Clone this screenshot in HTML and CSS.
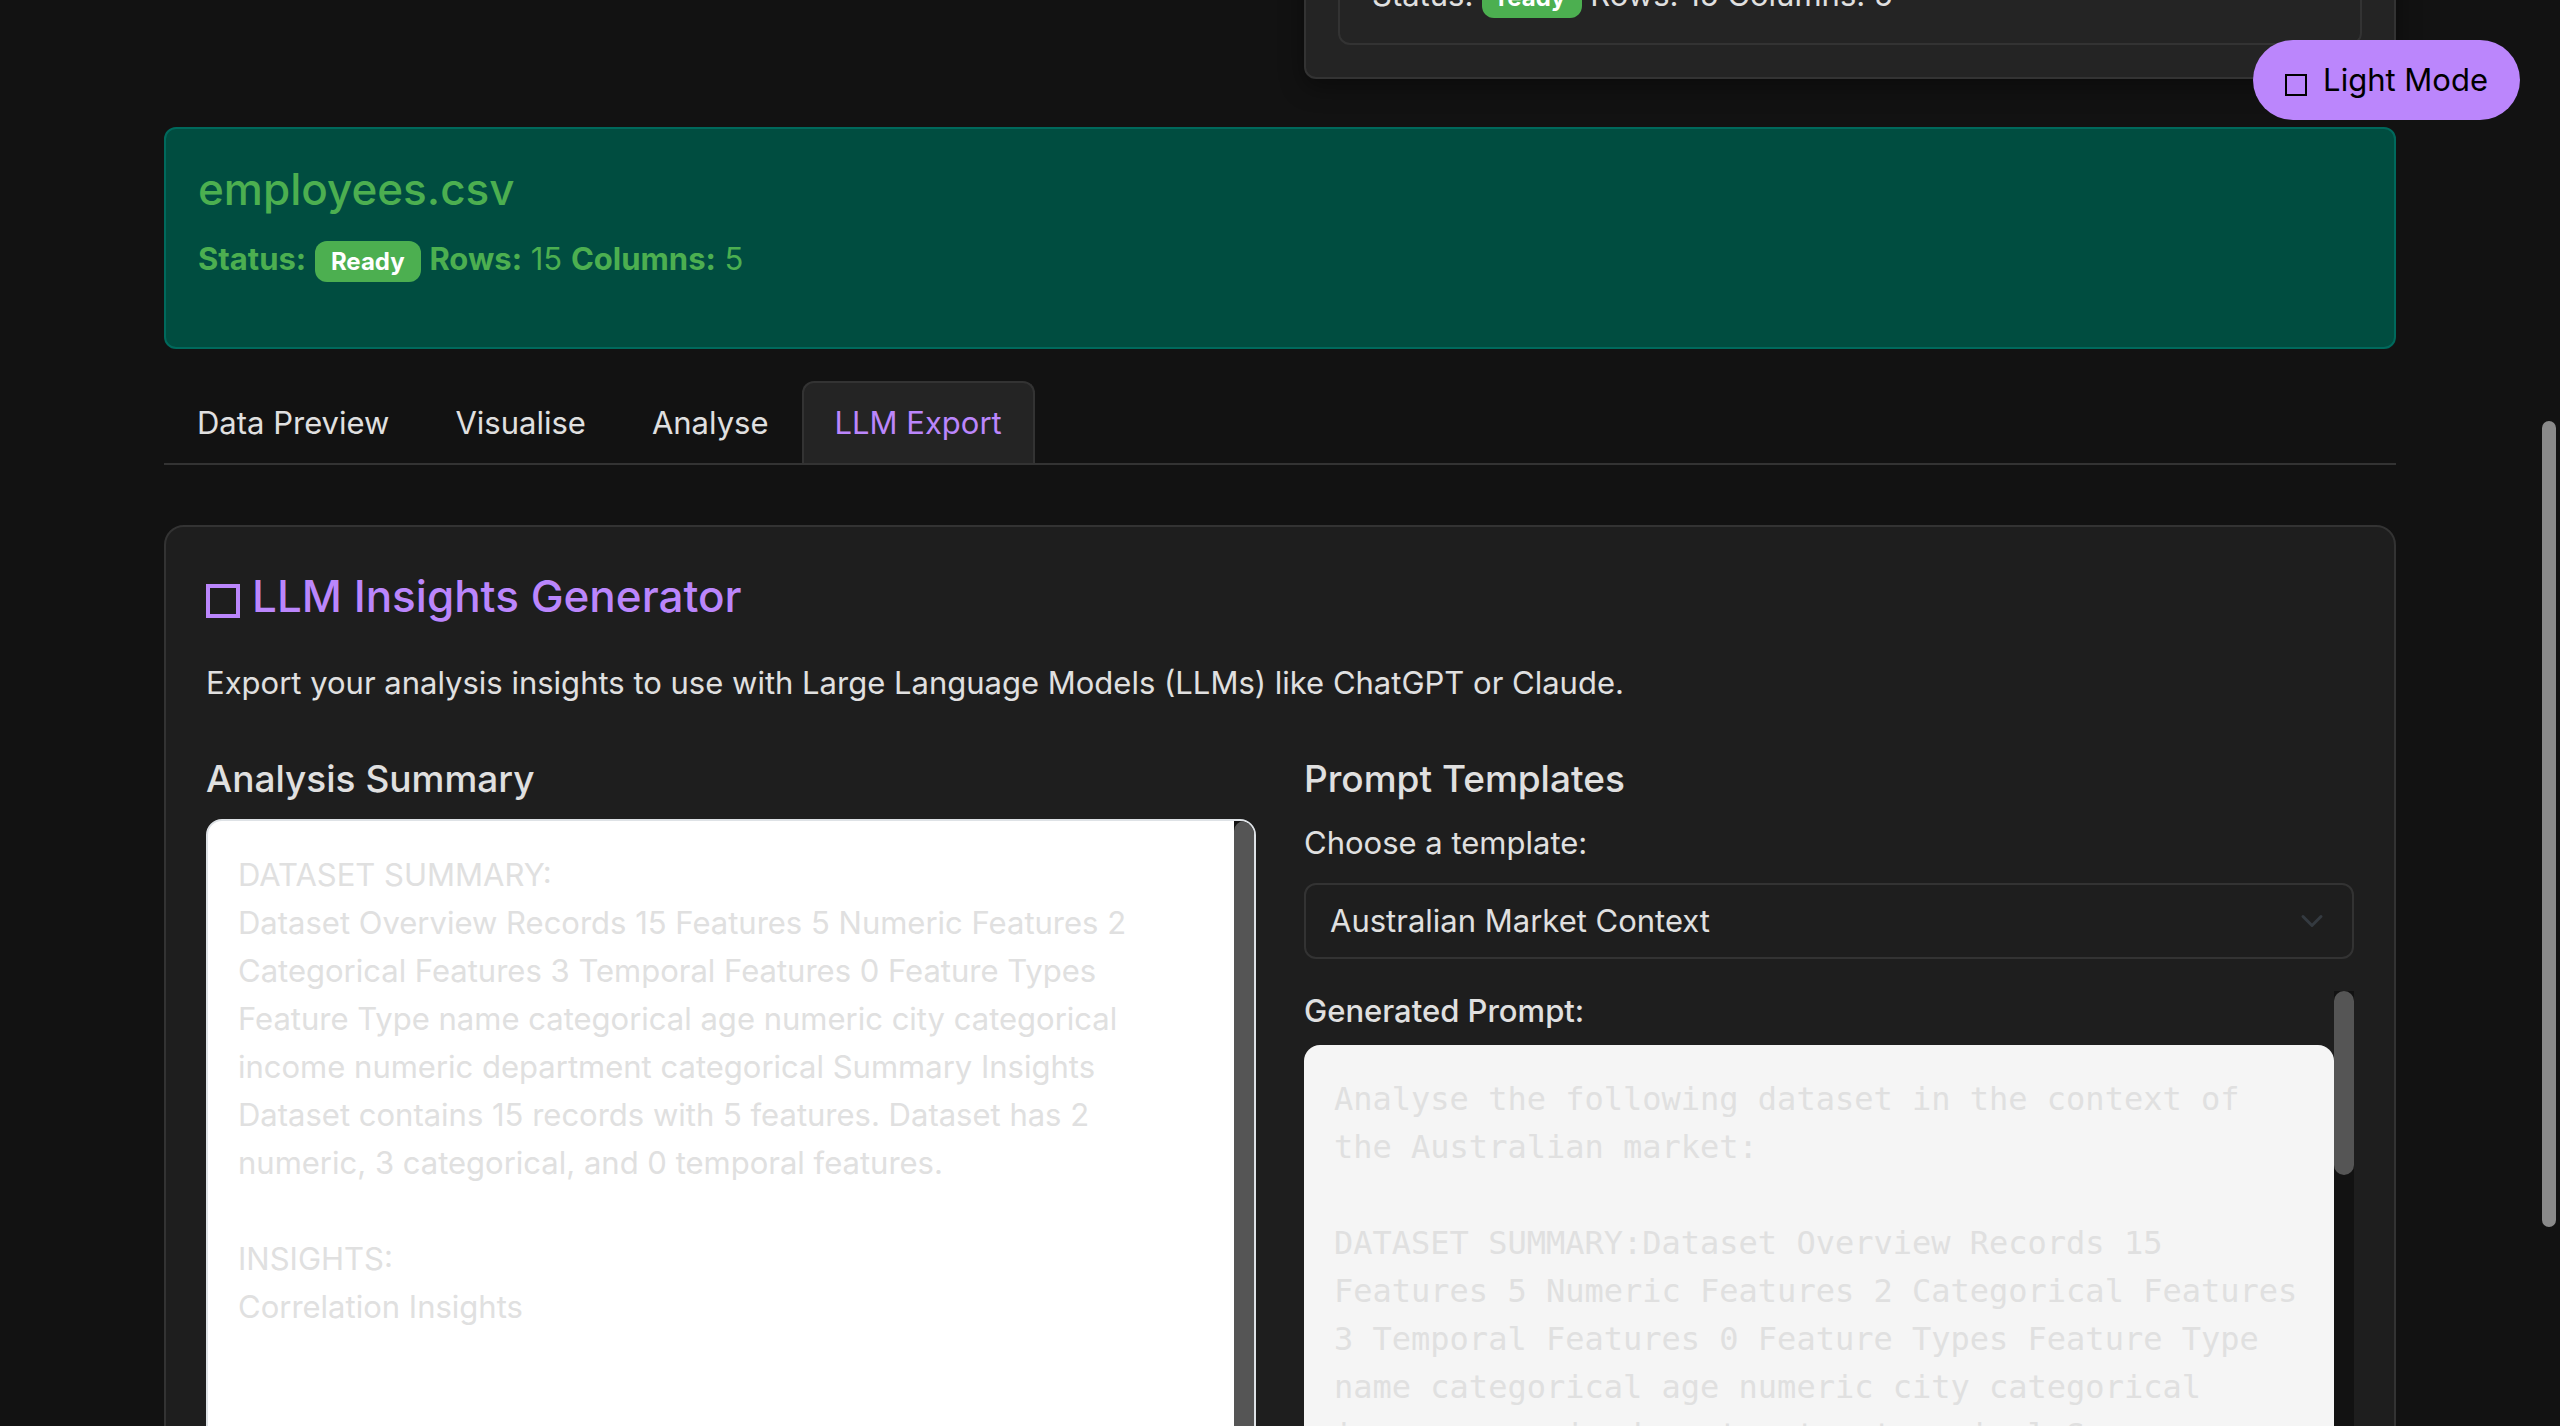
FILE: index.html
```html
<!DOCTYPE html>
<html lang="en">
<head>
<meta charset="utf-8">
<meta name="viewport" content="width=device-width, initial-scale=1">
<title>LLM Export</title>
<link rel="stylesheet" href="styles.css">
</head>
<body>
<button class="theme-toggle" type="button">
  <svg class="glyph-box" viewBox="0 0 22 22" aria-hidden="true"><rect x="1" y="1" width="20" height="20" fill="none" stroke="currentColor" stroke-width="2"/></svg>
  <span>Light Mode</span>
</button>

<main class="page">
  <div class="columns upload-row">
    <section class="card">
      <div class="card-inner">
        <p class="status">Status: <span class="badge">ready</span> Rows: 15 Columns: 5</p>
      </div>
    </section>
  </div>

  <section class="alert">
    <h2 class="alert-title">employees.csv</h2>
    <p class="status"><strong>Status:</strong> <span class="badge">Ready</span> <strong>Rows:</strong> 15 <strong>Columns:</strong> 5</p>
  </section>

  <nav class="tabs">
    <a class="tab" href="#preview">Data Preview</a>
    <a class="tab" href="#visualise">Visualise</a>
    <a class="tab" href="#analyse">Analyse</a>
    <a class="tab active" href="#export" aria-current="page">LLM Export</a>
  </nav>

  <section class="panel" id="export">
    <h3 class="panel-title">
      <svg class="glyph-box" viewBox="0 0 34 34" aria-hidden="true"><rect x="2" y="2" width="30" height="30" fill="none" stroke="currentColor" stroke-width="4"/></svg>
      <span>LLM Insights Generator</span>
    </h3>
    <p class="lead">Export your analysis insights to use with Large Language Models (LLMs) like ChatGPT or Claude.</p>

    <div class="columns">
      <section>
        <h4 class="section-title">Analysis Summary</h4>
        <div class="summary">
          <div class="summary-text">DATASET SUMMARY:<br>
            Dataset Overview Records 15 Features 5 Numeric Features 2 Categorical Features 3 Temporal Features 0 Feature Types Feature Type name categorical age numeric city categorical income numeric department categorical Summary Insights Dataset contains 15 records with 5 features. Dataset has 2 numeric, 3 categorical, and 0 temporal features.<br><br>
            INSIGHTS:<br>
            Correlation Insights</div>
          <div class="track"><div class="thumb thumb-long"></div></div>
        </div>
      </section>

      <section>
        <h4 class="section-title">Prompt Templates</h4>
        <label class="field-label" for="template">Choose a template:</label>
        <div class="select-wrap">
          <select class="select" id="template">
            <option>Australian Market Context</option>
          </select>
          <svg class="chevron" viewBox="0 0 16 16" aria-hidden="true"><path d="m2 5 6 6 6-6" fill="none" stroke="#343a40" stroke-width="2" stroke-linecap="round" stroke-linejoin="round"/></svg>
        </div>
        <div class="prompt">
          <div class="prompt-body">
            <h5 class="prompt-title">Generated Prompt:</h5>
            <pre class="prompt-text">Analyse the following dataset in the context of the Australian market:

DATASET SUMMARY:Dataset Overview Records 15 Features 5 Numeric Features 2 Categorical Features 3 Temporal Features 0 Feature Types Feature Type name categorical age numeric city categorical income numeric department categorical Summary Insights Dataset contains 15 records with 5 features.</pre>
          </div>
          <div class="track"><div class="thumb"></div></div>
        </div>
      </section>
    </div>
  </section>
</main>
<div class="page-thumb"></div>
</body>
</html>
```
FILE: styles.css
```css
*, *::before, *::after { box-sizing: border-box; }

body {
  margin: 0;
  height: 100vh;
  overflow: hidden;
  background: #121212;
  color: #e0e0e0;
  font-family: Inter, "Liberation Sans", sans-serif;
  font-size: 31px;
  line-height: 48px;
}

h2, h3, h4, h5, p, pre { margin: 0; }

.page { padding: 0 164px; }

.columns {
  display: grid;
  grid-template-columns: 1fr 1fr;
  gap: 48px;
}

.theme-toggle {
  position: fixed;
  top: 40px;
  right: 40px;
  z-index: 2;
  display: flex;
  align-items: center;
  gap: 16px;
  height: 80px;
  padding: 0 32px;
  border: 0;
  border-radius: 40px;
  background: #bb86fc;
  color: #000;
  font: inherit;
}
.theme-toggle .glyph-box { width: 22px; height: 22px; margin-top: 10px; }

.upload-row { margin: -65px 0 48px; }
.card {
  grid-column: 2;
  padding: 32px;
  border: 2px solid #333;
  border-radius: 12px;
  background: #242424;
  box-shadow: 0 8px 24px rgba(0, 0, 0, .4);
}
.card-inner {
  padding: 0 32px 24px;
  border: 2px solid #333;
  border-radius: 12px;
}

.badge {
  display: inline-block;
  padding: 8px 16px;
  border-radius: 12px;
  background: #4caf50;
  color: #fff;
  font-size: 24px;
  font-weight: 700;
  line-height: 25px;
}

.alert {
  padding: 32px 32px 64px;
  border: 2px solid #00695c;
  border-radius: 12px;
  background: #004d40;
  color: #4caf50;
}
.alert-title {
  margin-bottom: 18px;
  font-size: 44px;
  font-weight: 500;
  line-height: 56px;
}

.tabs {
  display: flex;
  margin: 32px 0 60px;
  border-bottom: 2px solid #333;
}
.tab {
  padding: 16px 31px;
  border: 2px solid transparent;
  border-bottom: 0;
  border-radius: 12px 12px 0 0;
  color: #e0e0e0;
  text-decoration: none;
}
.tab.active {
  border-color: #333;
  background: #242424;
  color: #bb86fc;
}

.panel {
  padding: 40px;
  border: 2px solid #333;
  border-radius: 20px;
  background: #1e1e1e;
}
.panel-title {
  display: flex;
  align-items: center;
  gap: 12px;
  margin-bottom: 34px;
  color: #bb86fc;
  font-size: 44px;
  font-weight: 500;
  line-height: 58px;
}
.panel-title .glyph-box { width: 34px; height: 34px; margin-top: 10px; }
.lead { margin-bottom: 48px; }

.section-title {
  margin-bottom: 16px;
  font-size: 37px;
  font-weight: 500;
  line-height: 48px;
}

.summary {
  display: flex;
  height: 800px;
  overflow: hidden;
  border: 2px solid #dee2e6;
  border-radius: 16px;
  background: #fff;
}
.summary-text { flex: 1; padding: 30px; color: #e0e0e0; }

.track { flex: none; width: 20px; background: #121212; }
.thumb { height: 184px; border-radius: 10px; background: #555; }
.thumb-long { height: 760px; }

.field-label { display: block; margin-bottom: 16px; }
.select-wrap { position: relative; margin-bottom: 32px; }
.select {
  appearance: none;
  width: 100%;
  height: 76px;
  padding: 0 24px;
  border: 2px solid #333;
  border-radius: 12px;
  background: #1e1e1e;
  color: #e0e0e0;
  font: inherit;
}
.chevron {
  position: absolute;
  top: 26px;
  right: 30px;
  width: 24px;
  height: 24px;
  pointer-events: none;
}

.prompt { display: flex; height: 800px; overflow: hidden; }
.prompt-body { flex: 1; min-width: 0; }
.prompt-title {
  margin-bottom: 14px;
  font-size: 31px;
  font-weight: 500;
  line-height: 40px;
}
.prompt-text {
  padding: 30px;
  border-radius: 16px;
  background: #f5f5f5;
  color: #e0e0e0;
  font-family: "DejaVu Sans Mono", monospace;
  font-size: 32px;
  line-height: 48px;
  white-space: pre-wrap;
}

.page-thumb {
  position: fixed;
  top: 421px;
  right: 4px;
  width: 14px;
  height: 806px;
  border-radius: 7px;
  background: #8a8a8a;
}
```
